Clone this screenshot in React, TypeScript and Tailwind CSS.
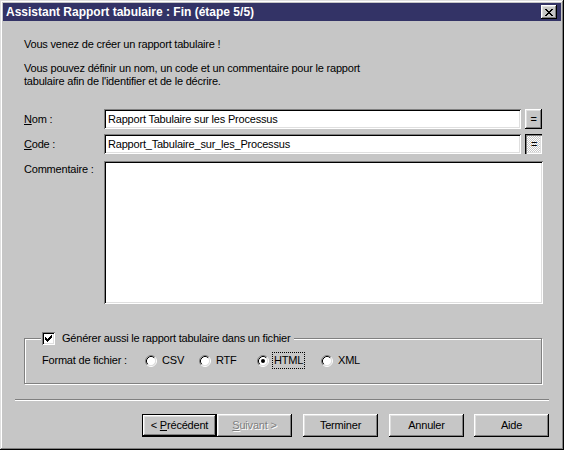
import type { ReactNode } from 'react';

// win95-ish bevels
const raised =
  'shadow-[inset_-1px_-1px_0_#000,inset_1px_1px_0_#fff,inset_-2px_-2px_0_#808080,inset_2px_2px_0_#dfdfdf]';
const sunken =
  'shadow-[inset_1px_1px_0_#808080,inset_-1px_-1px_0_#fff,inset_2px_2px_0_#000,inset_-2px_-2px_0_#dfdfdf]';

function Radio({ checked }: { checked?: boolean }) {
  return (
    <svg width="12" height="12" viewBox="0 0 12 12" className="shrink-0">
      <circle cx="6" cy="6" r="4.5" fill="#fff" />
      <path d="M2.11 9.89 A5.5 5.5 0 0 1 9.89 2.11" fill="none" stroke="#808080" />
      <path d="M9.89 2.11 A5.5 5.5 0 0 1 2.11 9.89" fill="none" stroke="#fff" />
      <path d="M2.82 9.18 A4.5 4.5 0 0 1 9.18 2.82" fill="none" stroke="#000" />
      <path d="M9.18 2.82 A4.5 4.5 0 0 1 2.82 9.18" fill="none" stroke="#dfdfdf" />
      {checked && <circle cx="6" cy="6" r="2" fill="#000" />}
    </svg>
  );
}

function Checkbox() {
  return (
    <div className={`w-[13px] h-[13px] bg-white shrink-0 ${sunken} flex items-center justify-center`}>
      <svg width="7" height="7" viewBox="0 0 7 7" shapeRendering="crispEdges">
        <path
          d="M6 0h1v3h-1v1h-1v1h-1v1h-1v1h-1v-1h-1v-1h-1v-3h1v1h1v1h1v-1h1v-1h1z"
          fill="#000"
        />
      </svg>
    </div>
  );
}

function WizButton({
  children,
  isDefault,
  disabled,
  className = '',
}: {
  children: ReactNode;
  isDefault?: boolean;
  disabled?: boolean;
  className?: string;
}) {
  return (
    <div
      className={`w-[75px] h-[23px] flex items-center justify-center ${raised} ${
        isDefault ? 'border border-black' : ''
      } ${disabled ? 'text-[#808080] [text-shadow:1px_1px_0_#fff]' : ''} ${className}`}
    >
      <span>{children}</span>
    </div>
  );
}

function RadioItem({ label, checked, focused, width }: { label: string; checked?: boolean; focused?: boolean; width: string }) {
  return (
    <div className={`flex items-center h-[17px] ${width}`}>
      <Radio checked={checked} />
      <span
        className={`ml-[3px] h-[17px] px-[1px] flex items-center border ${
          focused ? 'border-dotted border-black' : 'border-transparent'
        }`}
      >
        {label}
      </span>
    </div>
  );
}

export default function App() {
  return (
    <div className="w-[564px] h-[450px] bg-[#c6c6c6] p-[3px] flex flex-col shadow-[inset_-1px_-1px_0_#000,inset_1px_1px_0_#dfdfdf,inset_-2px_-2px_0_#808080,inset_2px_2px_0_#fff] [font-family:'Liberation_Sans',Arial,sans-serif] text-[11px] leading-[13px] tracking-[-0.2px] text-black">
      {/* title bar */}
      <div className="h-[18px] bg-[#333366] flex items-center justify-between pl-[3px] pr-[4px] shrink-0">
        <span className="text-white font-bold text-[12px] tracking-normal">
          Assistant Rapport tabulaire : Fin (étape 5/5)
        </span>
        <div className={`w-[16px] h-[14px] bg-[#c6c6c6] ${raised} flex items-center justify-center`}>
          <svg width="8" height="7" viewBox="0 0 8 7" shapeRendering="crispEdges">
            <path
              d="M0 0h2v1h1v1h2v-1h1v-1h2v1h-1v1h-1v1h-1v1h1v1h1v1h1v1h-2v-1h-1v-1h-2v1h-1v1h-2v-1h1v-1h1v-1h1v-1h-1v-1h-1z"
              fill="#000"
            />
          </svg>
        </div>
      </div>

      {/* body */}
      <div className="flex flex-col pl-[21px] pr-[18px] pt-[17px]">
        <p>Vous venez de créer un rapport tabulaire !</p>
        <p className="mt-[11px]">
          Vous pouvez définir un nom, un code et un commentaire pour le rapport
          <br />
          tabulaire afin de l'identifier et de le décrire.
        </p>

        <div className="mt-[21px] flex items-center h-[20px]">
          <span className="w-[80px]">
            <u>N</u>om :
          </span>
          <div className={`w-[417px] h-[20px] bg-white ${sunken} pl-[4px] flex items-center`}>
            Rapport Tabulaire sur les Processus
          </div>
          <div className={`ml-[4px] w-[17px] h-[20px] ${raised} flex items-center justify-center`}>=</div>
        </div>

        <div className="mt-[5px] flex items-center h-[20px]">
          <span className="w-[80px]">
            <u>C</u>ode :
          </span>
          <div className={`w-[417px] h-[20px] bg-white ${sunken} pl-[4px] flex items-center`}>
            Rapport_Tabulaire_sur_les_Processus
          </div>
          <div className="ml-[4px] w-[17px] h-[20px] bg-[repeating-conic-gradient(#fff_0_25%,#c6c6c6_0_50%)] bg-[length:2px_2px] shadow-[inset_1px_1px_0_#000,inset_2px_2px_0_#808080,inset_-1px_-1px_0_#fff,inset_-2px_-2px_0_#dfdfdf] flex items-center justify-center pt-[1px] pl-[1px]">
            =
          </div>
        </div>

        <div className="mt-[7px] flex items-start">
          <span className="w-[80px] mt-[2px]">Commentaire :</span>
          <div className={`w-[439px] h-[143px] bg-white ${sunken}`} />
        </div>

        {/* group box */}
        <div className="relative mt-[34px] w-[518px] border border-[#808080] shadow-[inset_1px_1px_0_#fff,1px_1px_0_#fff] pl-[17px] pt-[13px] pb-[14px]">
          <div className="absolute -top-[7px] left-[16px] bg-[#c6c6c6] flex items-center h-[13px] pl-[1px] pr-[4px]">
            <Checkbox />
            <span className="ml-[7px]">Générer aussi le rapport tabulaire dans un fichier</span>
          </div>
          <div className="flex items-center h-[17px]">
            <span className="w-[103px]">Format de fichier :</span>
            <RadioItem label="CSV" width="w-[54px]" />
            <RadioItem label="RTF" width="w-[58px]" />
            <RadioItem label="HTML" width="w-[64px]" checked focused />
            <RadioItem label="XML" width="w-[50px]" />
          </div>
        </div>
      </div>

      {/* separator */}
      <div className="mt-[15px] mx-[12px] h-[2px] border-t border-[#808080] border-b border-b-white" />

      {/* buttons */}
      <div className="mt-[13px] flex justify-end pr-[12px]">
        <WizButton isDefault>
          &lt; <u>P</u>récédent
        </WizButton>
        <WizButton disabled>
          <u>S</u>uivant &gt;
        </WizButton>
        <WizButton className="ml-[11px]">Terminer</WizButton>
        <WizButton className="ml-[11px]">Annuler</WizButton>
        <WizButton className="ml-[10px]">Aide</WizButton>
      </div>
    </div>
  );
}
